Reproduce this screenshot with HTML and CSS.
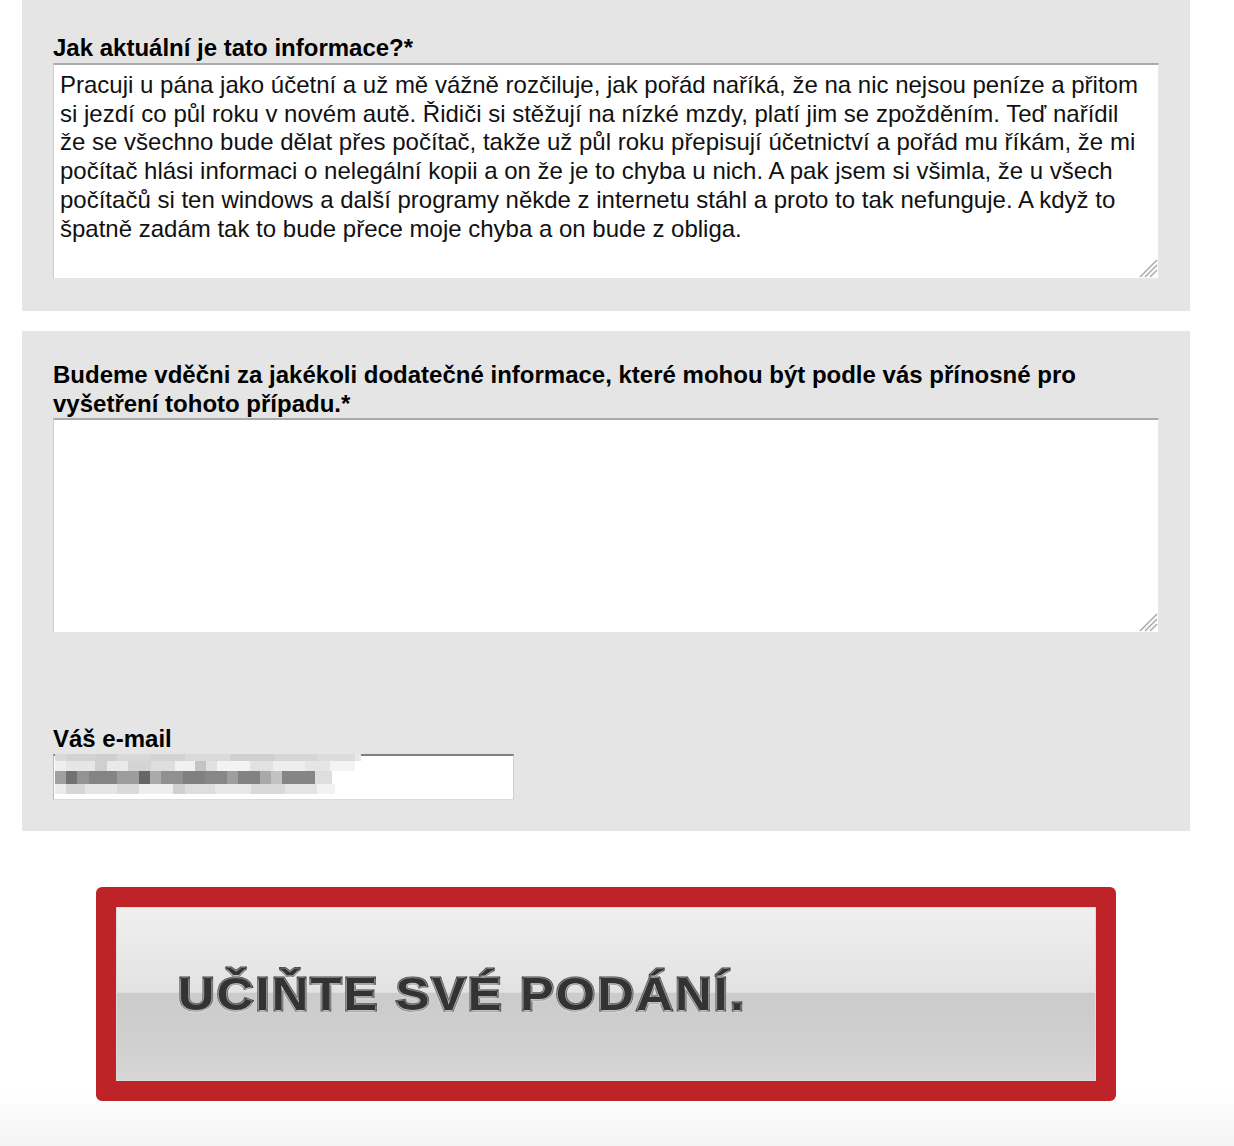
FILE: index.html
```html
<!DOCTYPE html>
<html lang="cs">
<head>
<meta charset="utf-8">
<title>Formulář</title>
<link rel="stylesheet" href="styles.css">
</head>
<body>
<div class="page">
  <section class="panel panel-first">
    <label class="label" for="q1">Jak aktuální je tato informace?*</label>
    <div class="field">
      <textarea id="q1" class="area area-first">Pracuji u pána jako účetní a už mě vážně rozčiluje, jak pořád naříká, že na nic nejsou peníze a přitom si jezdí co půl roku v novém autě. Řidiči si stěžují na nízké mzdy, platí jim se zpožděním. Teď nařídil že se všechno bude dělat přes počítač, takže už půl roku přepisují účetnictví a pořád mu říkám, že mi počítač hlási informaci o nelegální kopii a on že je to chyba u nich. A pak jsem si všimla, že u všech počítačů si ten windows a další programy někde z internetu stáhl a proto to tak nefunguje. A když to špatně zadám tak to bude přece moje chyba a on bude z obliga.</textarea>
      <svg class="grip" width="20" height="20" viewBox="0 0 20 20" aria-hidden="true">
        <line x1="2" y1="19" x2="19" y2="2" stroke="#a6a6a6" stroke-width="1.4"/>
        <line x1="3" y1="19.5" x2="19.5" y2="3" stroke="#e2e2e2" stroke-width="0.8"/>
        <line x1="7" y1="19" x2="19" y2="7" stroke="#a6a6a6" stroke-width="1.4"/>
        <line x1="8" y1="19.5" x2="19.5" y2="8" stroke="#e2e2e2" stroke-width="0.8"/>
        <line x1="12" y1="19" x2="19" y2="12" stroke="#a6a6a6" stroke-width="1.4"/>
        <line x1="13" y1="19.5" x2="19.5" y2="13" stroke="#e2e2e2" stroke-width="0.8"/>
      </svg>
    </div>
  </section>

  <section class="panel panel-second">
    <label class="label" for="q2">Budeme vděčni za jakékoli dodatečné informace, které mohou být podle vás přínosné pro vyšetření tohoto případu.*</label>
    <div class="field">
      <textarea id="q2" class="area area-second"></textarea>
      <svg class="grip" width="20" height="20" viewBox="0 0 20 20" aria-hidden="true">
        <line x1="2" y1="19" x2="19" y2="2" stroke="#a6a6a6" stroke-width="1.4"/>
        <line x1="3" y1="19.5" x2="19.5" y2="3" stroke="#e2e2e2" stroke-width="0.8"/>
        <line x1="7" y1="19" x2="19" y2="7" stroke="#a6a6a6" stroke-width="1.4"/>
        <line x1="8" y1="19.5" x2="19.5" y2="8" stroke="#e2e2e2" stroke-width="0.8"/>
        <line x1="12" y1="19" x2="19" y2="12" stroke="#a6a6a6" stroke-width="1.4"/>
        <line x1="13" y1="19.5" x2="19.5" y2="13" stroke="#e2e2e2" stroke-width="0.8"/>
      </svg>
    </div>

    <div class="email-block">
      <label class="label" for="mail">Váš e-mail</label>
      <div class="email-field">
        <input id="mail" class="email-input" type="text" value="">
        <div class="mosaic" aria-hidden="true"></div>
      </div>
    </div>
  </section>

  <button class="submit" type="button"><span class="submit-text">UČIŇTE SVÉ PODÁNÍ.</span></button>
</div>
</body>
</html>
```

FILE: styles.css
```css
html, body {
  margin: 0;
  padding: 0;
}

body {
  font-family: "Liberation Sans", Arial, Helvetica, sans-serif;
  color: #000;
  min-height: 1146px;
  background: linear-gradient(to bottom, #ffffff 0, #ffffff 1092px, #f4f4f4 1146px);
}

.page {
  width: 1168px;
  padding-left: 22px;
}

.panel {
  background: #e5e5e5;
  padding-left: 31px;
  padding-right: 31px;
}

.panel-first {
  padding-top: 34px;
  padding-bottom: 32px;
}

.panel-second {
  margin-top: 20px;
  padding-top: 30px;
  padding-bottom: 31px;
}

.label {
  display: block;
  font-weight: bold;
  font-size: 24px;
  line-height: 28.8px;
  color: #000;
}

.field {
  position: relative;
  width: 1106px;
}

.area {
  display: block;
  box-sizing: border-box;
  width: 1106px;
  margin: 0;
  padding: 6px 16px 6px 6px;
  font-family: "Liberation Sans", Arial, Helvetica, sans-serif;
  font-size: 24px;
  line-height: 28.8px;
  color: #111;
  background: #fff;
  border-style: solid;
  border-width: 2px 1px 1px 1px;
  border-color: #aaaaaa #e6e6e6 #e6e6e6 #cfcfcf;
  border-radius: 0;
  resize: none;
  outline: none;
  overflow: hidden;
}

.area-first {
  height: 216px;
}

.area-second {
  height: 215px;
}

.grip {
  position: absolute;
  right: 1px;
  bottom: 1px;
}

.email-block {
  margin-top: 92px;
}

.email-field {
  position: relative;
  width: 461px;
  height: 46px;
}

.email-input {
  display: block;
  box-sizing: border-box;
  width: 461px;
  height: 46px;
  margin: 0;
  padding: 0 6px;
  background: #fff;
  border-style: solid;
  border-width: 2px 1px 1px 1px;
  border-color: #7f7f7f #cfcfcf #dcdcdc #bdbdbd;
  border-radius: 0;
  outline: none;
  font-family: "Liberation Sans", Arial, sans-serif;
  font-size: 20px;
}

.mosaic {
  position: absolute;
  left: 2px;
  top: 0;
  width: 306px;
  height: 40px;
  background-repeat: no-repeat;
  background-image:
    linear-gradient(90deg, #d9d9d9 0 11px, #d2d2d2 11px 40px, #cfcfcf 40px 62px, #d8d8d8 62px 95px, #d3d3d3 95px 130px, #dadada 130px 175px, #d0d0d0 175px 220px, #d6d6d6 220px 262px, #dcdcdc 262px 300px, #e8e8e8 300px 306px),
    linear-gradient(90deg, #eeeeee 0 11px, #e6e6e6 11px 40px, #cfcfcf 40px 52px, #e9e9e9 52px 73px, #d4d4d4 73px 96px, #dedede 96px 120px, #f1f1f1 120px 140px, #c4c4c4 140px 151px, #e1e1e1 151px 162px, #f3f3f3 162px 195px, #e2e2e2 195px 218px, #eeeeee 218px 250px, #e5e5e5 250px 275px, #f4f4f4 275px 300px),
    linear-gradient(90deg, #a0a0a0 0 11px, #727272 11px 22px, #939393 22px 34px, #848484 34px 62px, #9c9c9c 62px 84px, #666666 84px 95px, #aaaaaa 95px 106px, #909090 106px 128px, #808080 128px 150px, #878787 150px 172px, #9e9e9e 172px 183px, #828282 183px 205px, #a9a9a9 205px 216px, #c2c2c2 216px 227px, #858585 227px 260px, #dedede 260px 277px),
    linear-gradient(90deg, #ebebeb 0 11px, #d6d6d6 11px 30px, #e5e5e5 30px 62px, #dadada 62px 84px, #eeeeee 84px 118px, #d0d0d0 118px 130px, #dedede 130px 160px, #e7e7e7 160px 196px, #d9d9d9 196px 230px, #e4e4e4 230px 262px, #f2f2f2 262px 280px);
  background-size: 306px 7px, 300px 10px, 277px 13px, 280px 10px;
  background-position: 0 0, 0 7px, 0 17px, 0 30px;
}

.submit {
  display: flex;
  align-items: center;
  box-sizing: border-box;
  width: 1020px;
  height: 214px;
  margin: 56px 0 0 74px;
  padding: 0 0 0 62px;
  border: 20px solid #bd2327;
  border-radius: 6px;
  background: linear-gradient(to bottom, #efefef 0%, #e9e9e9 25%, #e2e2e2 49%, #cbcbcb 49.6%, #cfcfcf 75%, #d7d7d7 100%);
  box-shadow: inset 0 0 0 1px #dcdcdc;
  cursor: pointer;
  font-family: "Liberation Sans", Arial, sans-serif;
}

.submit-text {
  display: inline-block;
  font-size: 46px;
  font-weight: bold;
  line-height: 46px;
  letter-spacing: 2px;
  color: #333333;
  -webkit-text-stroke: 3px #333333;
  paint-order: stroke fill;
  text-shadow: 0 1px 3px rgba(255, 255, 255, 0.95), 0 0 2px rgba(255, 255, 255, 0.8);
  transform: scaleX(1.1);
  transform-origin: left center;
  white-space: nowrap;
}
```
